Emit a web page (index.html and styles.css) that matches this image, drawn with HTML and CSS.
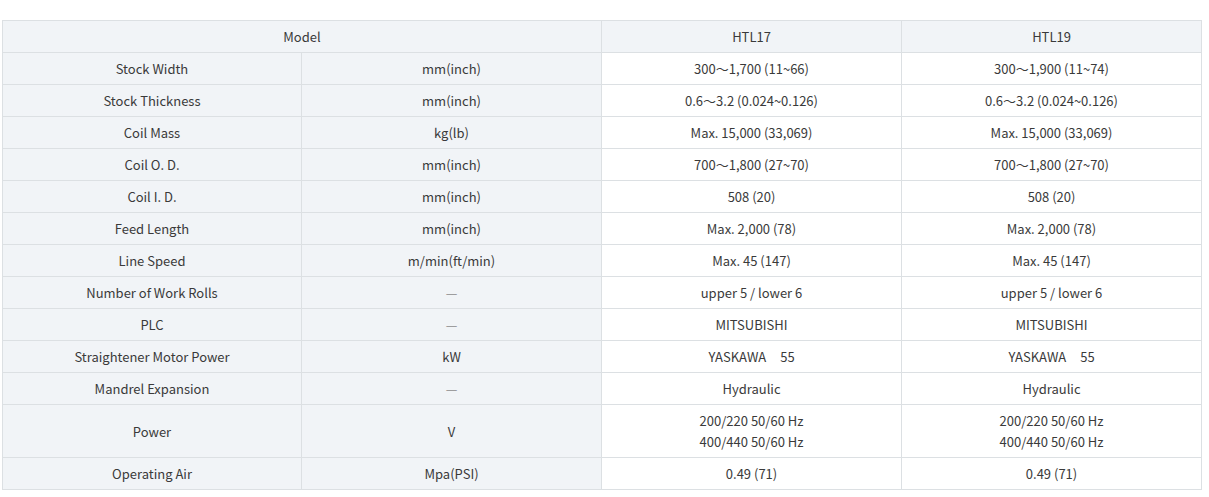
FILE: index.html
```html
<!DOCTYPE html>
<html lang="en">
<head>
<meta charset="utf-8">
<link rel="stylesheet" href="styles.css">
</head>
<body>
<table class="spec">
  <colgroup>
    <col class="c1"><col class="c"><col class="c"><col class="c">
  </colgroup>
  <thead>
    <tr><th colspan="2" class="lab">Model</th><th class="lab">HTL17</th><th class="lab">HTL19</th></tr>
  </thead>
  <tbody>
    <tr><td class="lab">Stock Width</td><td class="lab">mm(inch)</td><td>300～1,700 (11~66)</td><td>300～1,900 (11~74)</td></tr>
    <tr><td class="lab">Stock Thickness</td><td class="lab">mm(inch)</td><td>0.6～3.2 (0.024~0.126)</td><td>0.6～3.2 (0.024~0.126)</td></tr>
    <tr><td class="lab">Coil Mass</td><td class="lab">kg(lb)</td><td>Max. 15,000 (33,069)</td><td>Max. 15,000 (33,069)</td></tr>
    <tr><td class="lab">Coil O. D.</td><td class="lab">mm(inch)</td><td>700～1,800 (27~70)</td><td>700～1,800 (27~70)</td></tr>
    <tr><td class="lab">Coil I. D.</td><td class="lab">mm(inch)</td><td>508 (20)</td><td>508 (20)</td></tr>
    <tr><td class="lab">Feed Length</td><td class="lab">mm(inch)</td><td>Max. 2,000 (78)</td><td>Max. 2,000 (78)</td></tr>
    <tr><td class="lab">Line Speed</td><td class="lab">m/min(ft/min)</td><td>Max. 45 (147)</td><td>Max. 45 (147)</td></tr>
    <tr><td class="lab">Number of Work Rolls</td><td class="lab"><span class="dash">—</span></td><td>upper 5 / lower 6</td><td>upper 5 / lower 6</td></tr>
    <tr><td class="lab">PLC</td><td class="lab"><span class="dash">—</span></td><td>MITSUBISHI</td><td>MITSUBISHI</td></tr>
    <tr><td class="lab">Straightener Motor Power</td><td class="lab">kW</td><td>YASKAWA<span class="gap"></span>55</td><td>YASKAWA<span class="gap"></span>55</td></tr>
    <tr><td class="lab">Mandrel Expansion</td><td class="lab"><span class="dash">—</span></td><td>Hydraulic</td><td>Hydraulic</td></tr>
    <tr><td class="lab">Power</td><td class="lab">V</td><td>200/220 50/60 Hz<br>400/440 50/60 Hz</td><td>200/220 50/60 Hz<br>400/440 50/60 Hz</td></tr>
    <tr><td class="lab">Operating Air</td><td class="lab">Mpa(PSI)</td><td>0.49 (71)</td><td>0.49 (71)</td></tr>
  </tbody>
</table>
</body>
</html>
```
FILE: styles.css
```css
html, body {
  margin: 0;
  padding: 0;
  background: #ffffff;
}
body {
  padding: 20px 0 0 2px;
  font-family: "Noto Sans CJK KR", "Noto Sans", sans-serif;
  font-size: 13px;
  color: #3a3a3a;
}
.spec {
  width: 1199px;
  border-collapse: collapse;
  table-layout: fixed;
}
.spec .c1 {
  width: 299px;
}
.spec .c {
  width: 300px;
}
.spec th,
.spec td {
  border: 1px solid #dce0e3;
  padding: 5px 6px;
  line-height: 21px;
  text-align: center;
  font-weight: 400;
  vertical-align: middle;
}
.spec .lab {
  background: #f1f4f7;
}
.dash {
  color: #8a8a8a;
}
.gap {
  display: inline-block;
  width: 14px;
}
```
